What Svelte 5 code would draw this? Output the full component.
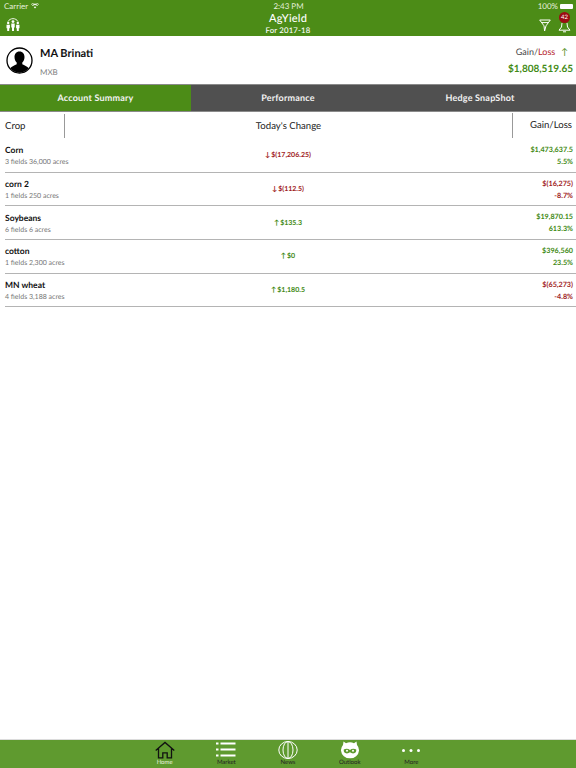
<script>
	const crops = [
		{ name: 'Corn', info: '3 fields 36,000 acres', change: '$(17,206.25)', gain: '$1,473,637.5', pct: '5.5%', up: false, gainUp: true },
		{ name: 'corn 2', info: '1 fields 250 acres', change: '$(112.5)', gain: '$(16,275)', pct: '-8.7%', up: false, gainUp: false },
		{ name: 'Soybeans', info: '6 fields 6 acres', change: '$135.3', gain: '$19,870.15', pct: '613.3%', up: true, gainUp: true },
		{ name: 'cotton', info: '1 fields 2,300 acres', change: '$0', gain: '$396,560', pct: '23.5%', up: true, gainUp: true },
		{ name: 'MN wheat', info: '4 fields 3,188 acres', change: '$1,180.5', gain: '$(65,273)', pct: '-4.8%', up: true, gainUp: false }
	];

	const tabs = ['Account Summary', 'Performance', 'Hedge SnapShot'];
</script>

<div class="page">
	<header class="top">
		<div class="status">
			<span class="carrier">
				Carrier
				<svg width="8" height="6" viewBox="0 0 16 12"><path d="M8 11 5.500 8a3.600 3.600 0 0 1 5 0zM3.600 6.200a6.400 6.400 0 0 1 8.800 0l1.400-1.500a8.500 8.500 0 0 0-11.600 0zM.7 3.300a10.600 10.600 0 0 1 14.600 0L16 2.500a12 12 0 0 0-16 0z" fill="#fff" /></svg>
			</span>
			<span class="clock">2:43 PM</span>
			<span class="battery">100%<i class="batt"></i></span>
		</div>
		<div class="bar">
			<svg class="group" width="14" height="14" viewBox="0 0 14 14" fill="#fff">
				<path d="M2 4.500a5.800 5.800 0 0 1 10 0" fill="none" stroke="#fff" stroke-width="0.9" />
				<circle cx="7" cy="4.600" r="1.400" />
				<path d="M5.300 6.500h3.400v4h-.7V14H6v-3.500h-.7z" />
				<circle cx="2.200" cy="6" r="1.200" />
				<path d="M.5 7.800h3.400v3.400h-.7V14h-2v-2.800H.5z" />
				<circle cx="11.800" cy="6" r="1.200" />
				<path d="M10.100 7.800h3.400v3.400h-.7V14h-2v-2.800h-.7z" />
			</svg>
			<div class="title">
				<div class="app">AgYield</div>
				<div class="year">For 2017-18</div>
			</div>
			<div class="actions">
				<svg width="12" height="13" viewBox="0 0 12 13" fill="none" stroke="#fff" stroke-width="1">
					<path d="M.7 1h10.600L7 6.800 5.600 12 5 6.800z" />
					<path d="M2.800 3.600h6.400" />
				</svg>
				<div class="bell">
					<svg width="13" height="15" viewBox="0 0 13 15" fill="none" stroke="#fff" stroke-width="1">
						<path d="M4 5 3.500 9 1 12.200h11L9.500 9 9 5" />
						<path d="M5 13.800h3" />
					</svg>
					<span class="badge">42</span>
				</div>
			</div>
		</div>
	</header>

	<section class="profile">
		<svg width="27" height="27" viewBox="0 0 27 27" class="avatar">
			<circle cx="13.500" cy="13.500" r="12.500" fill="#fff" stroke="#000" stroke-width="1.300" />
			<path d="M13.500 4.500c3.400 0 5 2.600 5 5.600 0 2.300-.9 4.300-2.200 5.400v1.700c2 1 5 2 6.500 4a12 12 0 0 1-18.600 0c1.500-2 4.500-3 6.500-4v-1.700C9.400 14.400 8.500 12.400 8.500 10.100c0-3 1.600-5.600 5-5.600z" fill="#000" />
		</svg>
		<div class="who">
			<div class="name">MA Brinati</div>
			<div class="code">MXB</div>
		</div>
		<div class="total">
			<div class="gl">Gain/<span class="loss">Loss</span><span class="arrow">↑</span></div>
			<div class="amount">$1,808,519.65</div>
		</div>
	</section>

	<nav class="tabs">
		{#each tabs as tab, i}
			<div class="tab" class:active={i === 0}>{tab}</div>
		{/each}
	</nav>

	<div class="head">
		<div class="h-crop">Crop</div>
		<div class="h-change">Today's Change</div>
		<div class="h-gain">Gain/Loss</div>
	</div>

	<div class="rows">
		{#each crops as c}
			<div class="row">
				<div class="crop">
					<div class="crop-name">{c.name}</div>
					<div class="crop-info">{c.info}</div>
				</div>
				<div class="change" class:neg={!c.up}><span class="dir">{c.up ? '↑' : '↓'}</span>{c.change}</div>
				<div class="gain" class:neg={!c.gainUp}>
					<div>{c.gain}</div>
					<div>{c.pct}</div>
				</div>
			</div>
		{/each}
	</div>

	<footer class="dock">
		<div class="dock-item current">
			<svg width="20" height="17" viewBox="0 0 20 17" fill="none" stroke="#111" stroke-width="1.300">
				<path d="M.7 9 10 .9 19.300 9M3.500 7v9.300h4.300v-5h4.400v5h4.300V7" />
			</svg>
			<span>Home</span>
		</div>
		<div class="dock-item">
			<svg width="20" height="17" viewBox="0 0 20 17" fill="#fff">
				<rect x="0" y="1" width="2.500" height="2" /><rect x="4.500" y="1" width="15" height="2" />
				<rect x="0" y="7" width="2.500" height="2" /><rect x="4.500" y="7" width="15" height="2" />
				<rect x="0" y="13" width="2.500" height="2" /><rect x="4.500" y="13" width="15" height="2" />
			</svg>
			<span>Market</span>
		</div>
		<div class="dock-item">
			<svg width="20" height="18" viewBox="0 0 20 18" fill="none" stroke="#fff" stroke-width="1">
				<ellipse cx="10" cy="9" rx="9.200" ry="8.500" />
				<ellipse cx="10" cy="9" rx="5" ry="8.500" />
				<path d="M10 .5v17" />
			</svg>
			<span>News</span>
		</div>
		<div class="dock-item">
			<svg width="20" height="18" viewBox="0 0 20 18">
				<path d="M3.500 .5 6 2.200a9 8 0 0 1 8 0L16.500 .5l.5 3.500A9 8.200 0 1 1 3 4z" fill="#fff" />
				<path d="M3.800 8.500c2-1.200 4.400-1 6.200.4 1.800-1.400 4.200-1.600 6.200-.4 .3 1.600-.3 3-1.500 3.600-1.700.6-3.500.2-4.700-.9-1.200 1.100-3 1.500-4.700.9-1.200-.6-1.800-2-1.500-3.600z" fill="#5f9a2f" />
				<circle cx="7" cy="9.800" r="1" fill="#fff" /><circle cx="13" cy="9.800" r="1" fill="#fff" />
			</svg>
			<span>Outlook</span>
		</div>
		<div class="dock-item">
			<svg width="20" height="17" viewBox="0 0 20 17" fill="#fff">
				<circle cx="2.500" cy="9" r="1.500" /><circle cx="10" cy="9" r="1.500" /><circle cx="17.500" cy="9" r="1.500" />
			</svg>
			<span>More</span>
		</div>
	</footer>
</div>

<style>
	:global(body) {
		margin: 0;
		background: #fff;
	}

	.page {
		width: 576px;
		height: 768px;
		display: flex;
		flex-direction: column;
		font-family: Lato, 'Liberation Sans', sans-serif;
		text-rendering: geometricPrecision;
		color: #111;
		overflow: hidden;
	}

	.top {
		height: 36px;
		background: #4c8c17;
		color: #fff;
		flex: none;
	}

	.status {
		height: 12px;
		display: grid;
		grid-template-columns: 1fr auto 1fr;
		align-items: center;
		padding: 0 3px 0 4px;
		font-size: 8px;
		line-height: 12px;
		color: #e6efdc;
	}

	.carrier {
		display: flex;
		align-items: center;
		gap: 3px;
	}

	.battery {
		display: flex;
		justify-content: flex-end;
		align-items: center;
		gap: 2px;
	}

	.batt {
		width: 13px;
		height: 5px;
		background: #fff;
		border-radius: 1px;
	}

	.bar {
		height: 24px;
		display: flex;
		align-items: center;
		justify-content: space-between;
		padding: 0 5px 0 6px;
	}

	.group {
		margin-top: -1px;
	}

	.title {
		text-align: center;
		position: absolute;
		left: 0;
		width: 576px;
		top: 12px;
	}

	.app {
		font-size: 11px;
		line-height: 13px;
		font-weight: 500;
		letter-spacing: 0.2px;
	}

	.year {
		font-size: 7.800px;
		line-height: 11px;
		font-weight: 500;
		letter-spacing: 0.15px;
	}

	.actions {
		display: flex;
		align-items: center;
		gap: 7px;
		margin-top: 3px;
	}

	.bell {
		position: relative;
		width: 13px;
		height: 15px;
	}

	.badge {
		position: absolute;
		top: -6px;
		left: 1px;
		width: 11px;
		height: 11px;
		border-radius: 50%;
		background: #9c0c12;
		font-size: 6px;
		line-height: 11px;
		text-align: center;
		color: #fff;
	}

	.profile {
		height: 48px;
		flex: none;
		box-sizing: border-box;
		display: flex;
		align-items: center;
		padding: 0 3px 0 6px;
	}

	.who {
		margin-left: 7px;
		flex: 1;
		padding-top: 5px;
	}

	.name {
		font-size: 11px;
		line-height: 14px;
		font-weight: 700;
		margin-bottom: 5px;
	}

	.code {
		font-size: 8px;
		line-height: 12px;
		color: #808080;
	}

	.total {
		text-align: right;
		padding-top: 2px;
	}

	.gl {
		font-size: 9px;
		line-height: 12px;
		color: #444;
		margin-bottom: 4px;
		padding-right: 5px;
	}

	.loss {
		color: #b5232c;
	}

	.arrow {
		color: #4c8c17;
		margin-left: 6px;
		font-size: 9px;
	}

	.amount {
		font-size: 10px;
		line-height: 14px;
		font-weight: 700;
		color: #3f8a14;
	}

	.tabs {
		height: 28px;
		flex: none;
		display: grid;
		grid-template-columns: repeat(3, 1fr);
		box-sizing: border-box;
		border-top: 1px solid #8a8a8a;
		border-bottom: 1px solid #8a8a8a;
		background: #505050;
	}

	.tab {
		color: #f2f2f2;
		font-size: 9px;
		font-weight: 700;
		letter-spacing: 0.2px;
		display: flex;
		align-items: center;
		justify-content: center;
		padding-bottom: 2px;
	}

	.tab.active {
		background: #4c8c17;
		margin-right: 1px;
	}

	.head {
		height: 27px;
		flex: none;
		display: flex;
		font-size: 9.600px;
		color: #222;
		align-items: stretch;
	}

	.head > div {
		display: flex;
		align-items: center;
	}

	.h-crop {
		width: 59px;
		padding-left: 5px;
		border-right: 1px solid #999;
		margin-top: 2px;
		margin-bottom: 1px;
	}

	.h-change {
		flex: 1;
		justify-content: center;
		padding-top: 1px;
	}

	.h-gain {
		width: 59px;
		padding-right: 4px;
		justify-content: flex-end;
		border-left: 1px solid #999;
		margin-top: 1px;
		margin-bottom: 1px;
	}

	.rows {
		flex: 1;
		margin-left: 5px;
	}

	.row {
		height: 33.700px;
		box-sizing: border-box;
		border-bottom: 1px solid #b4b4b4;
		display: grid;
		grid-template-columns: 1fr 1fr 1fr;
		align-items: center;
		padding-right: 3px;
	}

	.crop {
		padding-top: 2px;
	}

	.crop-name {
		font-size: 8.500px;
		line-height: 11px;
		font-weight: 700;
		margin-bottom: 1px;
	}

	.crop-info {
		font-size: 7px;
		line-height: 10px;
		color: #777;
	}

	.change {
		font-size: 7px;
		font-weight: 700;
		text-align: center;
		color: #3f8a14;
		transform: translateX(-1px);
	}

	.dir {
		margin-right: 1px;
	}

	.gain {
		text-align: right;
		font-size: 7.200px;
		font-weight: 700;
		line-height: 12px;
		color: #3f8a14;
		padding-top: 1px;
	}

	.neg {
		color: #a01c24;
	}

	.dock {
		height: 29px;
		flex: none;
		box-sizing: border-box;
		border-top: 1px solid #dcdcdc;
		background: #5f9a2f;
		display: flex;
		justify-content: center;
	}

	.dock-item {
		width: 61.700px;
		display: flex;
		flex-direction: column;
		align-items: center;
		color: #222;
		font-size: 6px;
	}

	.dock-item svg {
		height: 18px;
		margin-top: 1px;
		flex: none;
	}

	.dock-item span {
		line-height: 7px;
	}

	.dock-item.current span {
		color: #e8f0dc;
	}
</style>
